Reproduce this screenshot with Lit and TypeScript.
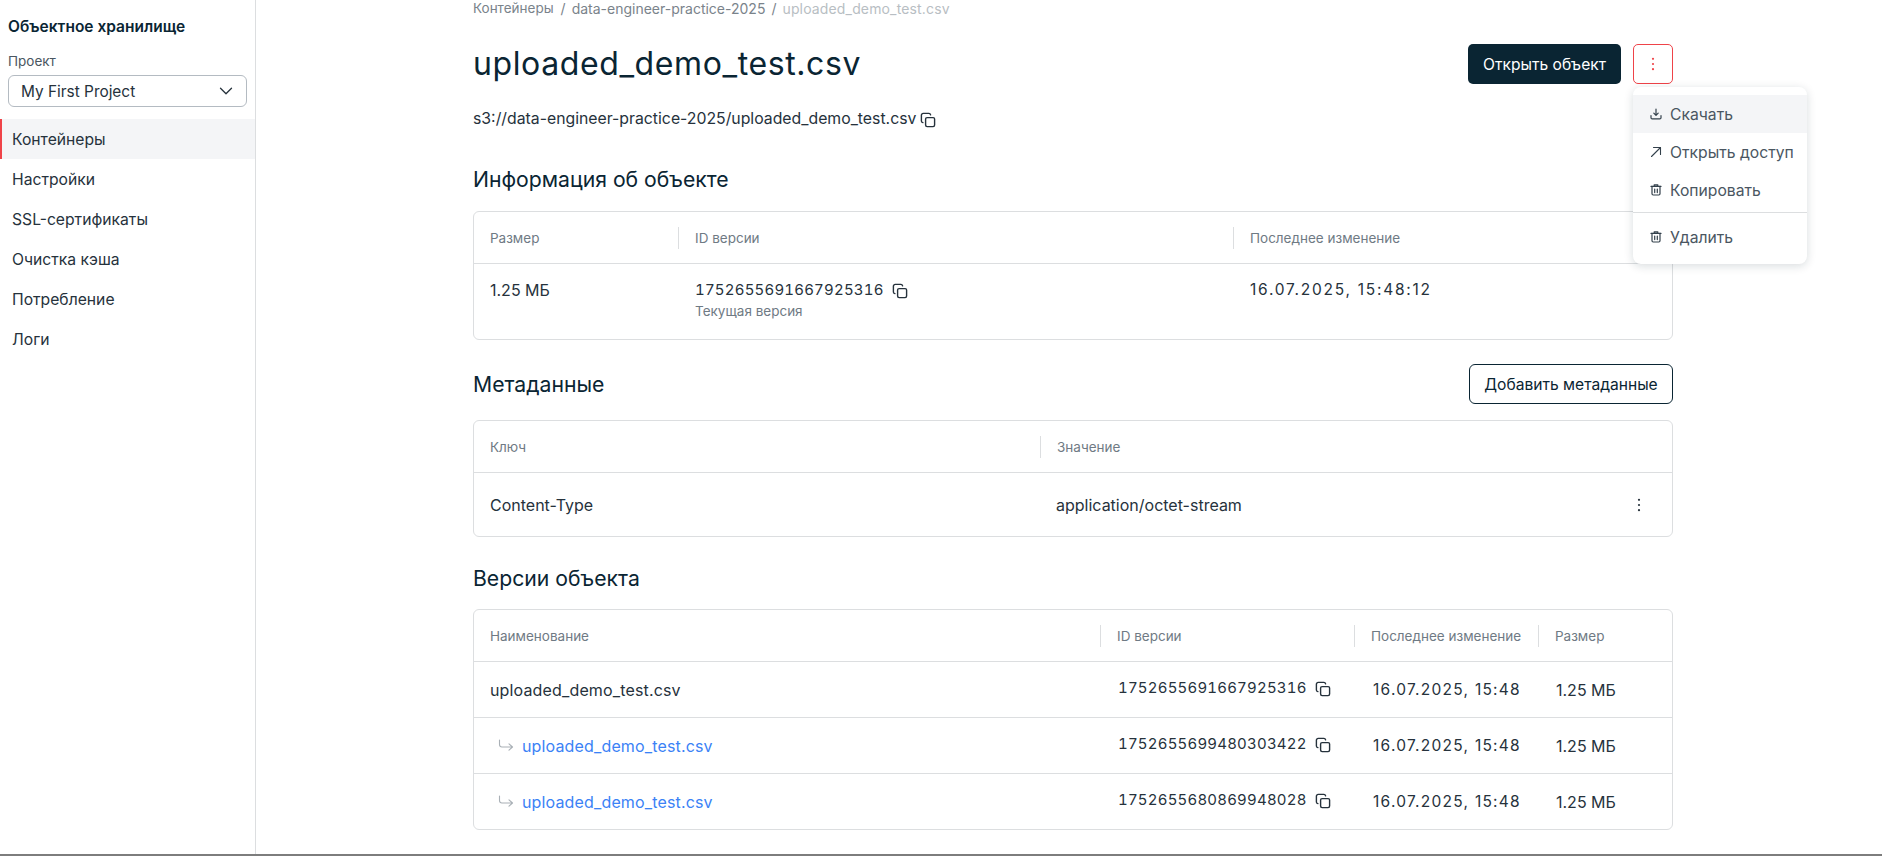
import { LitElement, html, css, svg } from "lit";
import { customElement } from "lit/decorators.js";

const NAV = ["Контейнеры", "Настройки", "SSL-сертификаты", "Очистка кэша", "Потребление", "Логи"];
const NAME = "uploaded_demo_test.csv";

const VERSIONS = [
	{ id: "1752655691667925316", child: false },
	{ id: "1752655699480303422", child: true },
	{ id: "1752655680869948028", child: true },
];

const copyIcon = svg`<svg class="icon" viewBox="0 0 16 16" width="16" height="16" fill="none" stroke="currentColor" stroke-width="1.4" stroke-linejoin="round" stroke-linecap="round"><rect x="5.6" y="5.6" width="9" height="9" rx="1.5"/><path d="M2.9 10.6 C2 10.4 1.4 9.8 1.4 8.9 V3.2 C1.4 2.2 2.2 1.4 3.2 1.4 H8.9 C9.8 1.4 10.4 2 10.6 2.9"/></svg>`;
const downloadIcon = svg`<svg viewBox="0 0 14 14" width="14" height="14" fill="none" stroke="currentColor" stroke-width="1.2" stroke-linecap="round" stroke-linejoin="round"><path d="M7 2v6.2M4.8 6.2 7 8.4l2.2-2.2"/><path d="M2 8.5v2.2c0 .7.5 1.2 1.2 1.2h7.6c.7 0 1.2-.5 1.2-1.2V8.5"/></svg>`;
const shareIcon = svg`<svg viewBox="0 0 14 14" width="14" height="14" fill="none" stroke="currentColor" stroke-width="1.1" stroke-linecap="round" stroke-linejoin="round"><path d="M2.5 11.5 11.5 2.5M4.5 2.5h7v7"/></svg>`;
const trashIcon = svg`<svg viewBox="0 0 14 14" width="14" height="14" fill="none" stroke="currentColor" stroke-width="1.2" stroke-linecap="round" stroke-linejoin="round"><path d="M2 3.4h10M5.2 3.2V1.8h3.6v1.4"/><path d="M3 3.4v7.4c0 .7.5 1.2 1.2 1.2h5.6c.7 0 1.2-.5 1.2-1.2V3.4"/><path d="M5.7 6v3.6M8.3 6v3.6"/></svg>`;
const returnIcon = svg`<svg viewBox="0 0 16 14" width="16" height="14" fill="none" stroke="currentColor" stroke-width="1.1" stroke-linecap="round" stroke-linejoin="round"><path d="M1.5 1v4.5c0 1.6 1 2.5 2.5 2.5h10.5M11 4.8 14.5 8 11 11.2"/></svg>`;
const kebab = svg`<svg viewBox="0 0 16 16" width="16" height="16" fill="currentColor"><circle cx="8" cy="2.8" r="1.1"/><circle cx="8" cy="8" r="1.1"/><circle cx="8" cy="13.2" r="1.1"/></svg>`;
const chevron = svg`<svg viewBox="0 0 16 16" width="16" height="16" fill="none" stroke="currentColor" stroke-width="1.3" stroke-linecap="round" stroke-linejoin="round"><path d="M2.5 5.2 8 10.8l5.5-5.6"/></svg>`;

@customElement("app-root")
export class AppRoot extends LitElement {
	static styles = css`
		:host {
			display: block;
			height: 856px;
			overflow: hidden;
			background: #fff;
			color: #0a2533;
			font-family: Inter, "Noto Sans", sans-serif;
			font-size: 15.7px;
		}
		.page {
			display: flex;
			height: 854px;
			border-bottom: 2px solid #7d7d7d;
		}
		.side {
			width: 255px;
			flex: none;
			border-right: 1px solid #dcdee0;
			padding-top: 18px;
		}
		.side-title {
			padding-left: 8px;
			font-size: 15.5px;
			font-weight: 600;
			line-height: 18px;
		}
		.project {
			padding: 16px 8px 12px;
		}
		.project label {
			display: block;
			font-size: 13.5px;
			line-height: 18px;
			color: #4a5661;
			margin-bottom: 5px;
		}
		.select {
			display: flex;
			align-items: center;
			justify-content: space-between;
			height: 30px;
			border: 1px solid #b4bbc2;
			border-radius: 6px;
			padding: 0 12px;
			font-size: 15.4px;
			color: #26323c;
		}
		.nav-item {
			height: 40px;
			display: flex;
			align-items: center;
			padding-left: 12px;
			color: #26323c;
		}
		.nav-item.active {
			background: #f4f5f7;
			box-shadow: inset 2px 0 0 #ef4349;
		}
		.main {
			position: relative;
			margin-left: 217px;
			width: 1200px;
		}
		.crumbs {
			display: flex;
			gap: 6px;
			font-size: 14px;
			line-height: 17px;
			color: #7a838b;
			white-space: nowrap;
		}
		.crumbs .first {
			font-size: 13.5px;
			margin-right: 1px;
		}
		.crumbs .cur {
			color: #b8bec3;
			letter-spacing: 0.15px;
		}
		.head {
			display: flex;
			align-items: center;
			justify-content: space-between;
			height: 40px;
			margin-top: 27px;
		}
		h1 {
			margin: 0;
			font-size: 32px;
			font-weight: 400;
			letter-spacing: 0.6px;
			line-height: 40px;
		}
		.actions {
			display: flex;
			gap: 12px;
		}
		.btn-dark {
			height: 40px;
			width: 153px;
			display: flex;
			align-items: center;
			justify-content: center;
			background: #0a2533;
			color: #fff;
			border-radius: 5px;
			font-size: 15.6px;
		}
		.btn-more {
			box-sizing: border-box;
			width: 40px;
			height: 40px;
			display: flex;
			align-items: center;
			justify-content: center;
			border: 1px solid #ef4349;
			border-radius: 5px;
			color: #ef4349;
		}
		.path {
			display: flex;
			align-items: center;
			gap: 4px;
			margin-top: 24px;
			font-size: 15.8px;
			line-height: 22px;
			color: #26323c;
		}
		.icon {
			flex: none;
			color: #26323c;
			margin-top: 2px;
		}
		.sec-head {
			display: flex;
			align-items: center;
			justify-content: space-between;
			height: 40px;
		}
		h2 {
			margin: 0;
			font-size: 21.2px;
			font-weight: 400;
			line-height: 28px;
		}
		.info-title {
			margin-top: 35px;
		}
		.meta-title {
			margin-top: 24px;
		}
		.ver-title {
			margin-top: 27px;
		}
		.btn-outline {
			box-sizing: border-box;
			width: 204px;
			height: 40px;
			display: flex;
			align-items: center;
			justify-content: center;
			border: 1px solid #0a2533;
			border-radius: 6px;
			font-size: 15.6px;
		}
		.table {
			border: 1px solid #dcdee0;
			border-radius: 6px;
			margin-top: 18px;
		}
		.sec-head + .table {
			margin-top: 16px;
		}
		.ver-title + .table {
			margin-top: 17px;
		}
		.row {
			display: grid;
			align-items: center;
		}
		.row + .row {
			border-top: 1px solid #dcdee0;
		}
		.info {
			grid-template-columns: 204px 555px 1fr;
		}
		.meta {
			grid-template-columns: 566px 1fr 66px;
		}
		.vers {
			grid-template-columns: 626px 254px 184px 1fr;
		}
		.hrow {
			height: 51px;
		}
		.th {
			font-size: 13.5px;
			line-height: 22px;
			color: #6f7a84;
			padding-left: 16px;
			box-sizing: border-box;
			white-space: nowrap;
		}
		.th + .th {
			border-left: 1px solid #dcdee0;
		}
		.td {
			padding-left: 16px;
			font-size: 16px;
			line-height: 22px;
			color: #26323c;
			white-space: nowrap;
		}
		.info .td {
			align-self: start;
			padding-top: 15px;
		}
		.info .td + .td {
			padding-left: 17px;
		}
		.latin {
			letter-spacing: 0.15px;
		}
		.num {
			font-size: 15.5px;
		}
		.date-long {
			letter-spacing: 1.75px;
		}
		.date {
			letter-spacing: 1.26px;
		}
		.vers .td + .td {
			padding-left: 18px;
		}
		.vers .td.date {
			padding-left: 19px;
		}
		.info-body {
			height: 75px;
		}
		.meta-body {
			height: 63px;
		}
		.ver-row {
			height: 55px;
		}
		.id {
			display: flex;
			align-items: center;
			gap: 8px;
			font-size: 15px;
			letter-spacing: 0.2px;
			font-variant-numeric: tabular-nums;
		}
		.vers .id {
			padding-bottom: 3px;
		}
		.sub {
			margin-top: 1px;
			font-size: 13.5px;
			line-height: 18px;
			color: #6f7a84;
		}
		.kebab {
			display: flex;
			justify-content: center;
			padding-left: 0;
		}
		.link {
			display: flex;
			align-items: center;
			gap: 8px;
			color: #3b82f6;
		}
		.link svg {
			color: #a9b0b6;
			margin-left: 8px;
		}
		.menu {
			position: absolute;
			left: 1160px;
			top: 87px;
			width: 174px;
			box-sizing: border-box;
			padding: 8px 0;
			background: #fff;
			border-radius: 8px;
			box-shadow: 0 2px 10px rgba(10, 37, 51, 0.16);
			color: #4a5661;
		}
		.mi {
			height: 38px;
			display: flex;
			align-items: center;
			gap: 7px;
			padding-left: 16px;
			white-space: nowrap;
		}
		.mi svg {
			flex: none;
			color: #33404b;
		}
		.mi.hover {
			background: #f4f5f7;
		}
		.sep {
			border-top: 1px solid #dcdee0;
			margin: 3px 0 5px;
		}
	`;

	render() {
		return html`
			<div class="page">
				<aside class="side">
					<div class="side-title">Объектное хранилище</div>
					<div class="project">
						<label>Проект</label>
						<div class="select"><span>My First Project</span>${chevron}</div>
					</div>
					${NAV.map((n, i) => html`<div class="nav-item ${i === 0 ? "active" : ""}">${n}</div>`)}
				</aside>
				<main class="main">
					<div class="crumbs">
						<span class="first">Контейнеры</span><span>/</span><span>data-engineer-practice-2025</span><span>/</span>
						<span class="cur">${NAME}</span>
					</div>
					<div class="head">
						<h1>${NAME}</h1>
						<div class="actions">
							<div class="btn-dark">Открыть объект</div>
							<div class="btn-more">${kebab}</div>
						</div>
					</div>
					<div class="path">s3://data-engineer-practice-2025/${NAME} ${copyIcon}</div>

					<h2 class="info-title">Информация об объекте</h2>
					<div class="table">
						<div class="row info hrow">
							<div class="th">Размер</div>
							<div class="th">ID версии</div>
							<div class="th">Последнее изменение</div>
						</div>
						<div class="row info info-body">
							<div class="td">1.25 МБ</div>
							<div class="td">
								<div class="id">1752655691667925316 ${copyIcon}</div>
								<div class="sub">Текущая версия</div>
							</div>
							<div class="td num date-long">16.07.2025, 15:48:12</div>
						</div>
					</div>

					<div class="sec-head meta-title">
						<h2>Метаданные</h2>
						<div class="btn-outline">Добавить метаданные</div>
					</div>
					<div class="table">
						<div class="row meta hrow">
							<div class="th">Ключ</div>
							<div class="th">Значение</div>
						</div>
						<div class="row meta meta-body">
							<div class="td">Content-Type</div>
							<div class="td">application/octet-stream</div>
							<div class="td kebab">${kebab}</div>
						</div>
					</div>

					<h2 class="ver-title">Версии объекта</h2>
					<div class="table">
						<div class="row vers hrow">
							<div class="th">Наименование</div>
							<div class="th">ID версии</div>
							<div class="th">Последнее изменение</div>
							<div class="th">Размер</div>
						</div>
						${VERSIONS.map(
							(v) => html`
								<div class="row vers ver-row">
									${v.child
										? html`<div class="td link latin">${returnIcon}<span>${NAME}</span></div>`
										: html`<div class="td latin">${NAME}</div>`}
									<div class="td id">${v.id} ${copyIcon}</div>
									<div class="td num date">16.07.2025, 15:48</div>
									<div class="td">1.25 МБ</div>
								</div>
							`,
						)}
					</div>

					<div class="menu">
						<div class="mi hover">${downloadIcon}<span>Скачать</span></div>
						<div class="mi">${shareIcon}<span>Открыть доступ</span></div>
						<div class="mi">${trashIcon}<span>Копировать</span></div>
						<div class="sep"></div>
						<div class="mi">${trashIcon}<span>Удалить</span></div>
					</div>
				</main>
			</div>
		`;
	}
}
